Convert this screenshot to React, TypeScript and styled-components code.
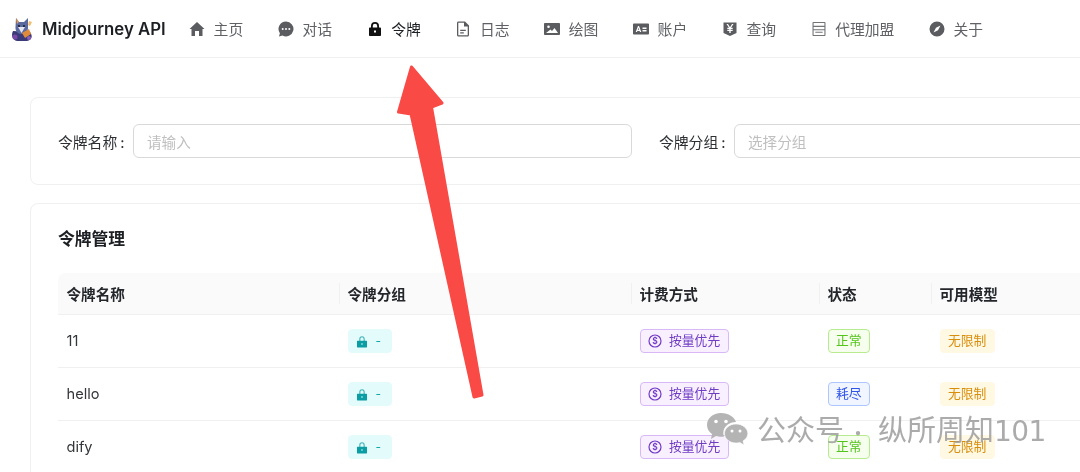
import React from "react";
import styled, { createGlobalStyle } from "styled-components";

const Global = createGlobalStyle`
  html, body { margin: 0; padding: 0; background: #fff; }
  body { font-family: Inter, "Noto Sans CJK SC", "Liberation Sans", sans-serif; color: #1c1f23; overflow: hidden; }
  #root { width: 1080px; height: 472px; overflow: hidden; position: relative; }
`;

const Page = styled.div`
  width: 1080px;
  height: 472px;
  overflow: hidden;
  position: relative;
  background: #fff;
  filter: blur(0.4px);
`;

const Header = styled.header`
  height: 57px;
  border-bottom: 1px solid #f0f0f1;
  display: flex;
  align-items: center;
  padding-left: 10px;
`;

const Brand = styled.div`
  display: flex;
  align-items: center;
  gap: 8px;
  width: 179px;
  flex: none;
  font-size: 16.8px;
  font-weight: 600;
  color: #1c1f23;
  white-space: nowrap;
`;

const Nav = styled.nav`
  display: flex;
  align-items: center;
  gap: 34.6px;
`;

const NavItem = styled.div<{ $active?: boolean }>`
  display: flex;
  align-items: center;
  gap: 8.6px;
  font-size: 14.8px;
  white-space: nowrap;
  color: ${(p) => (p.$active ? "#1c1f23" : "#5f6166")};
  svg { width: 16px; height: 16px; flex: none; fill: ${(p) => (p.$active ? "#111" : "#5a5c60")}; }
`;

const Main = styled.main`
  width: 1300px;
  padding: 39px 0 0 30px;
  display: flex;
  flex-direction: column;
  gap: 18px;
`;

const Card = styled.section`
  border: 1px solid #f0f0f1;
  border-radius: 8px;
  padding: 25px 27px;
`;

const SearchCard = styled(Card)`
  display: flex;
  align-items: center;
  height: 88px;
  box-sizing: border-box;
  padding-top: 0;
  padding-bottom: 0;
`;

const Field = styled.div`
  display: flex;
  align-items: center;
  margin-right: 27px;
`;

const Label = styled.span`
  font-size: 14.8px;
  color: #2c2f33;
  white-space: nowrap;
  width: 75px;
  flex: none;
`;

const Colon = styled.span`
  margin-left: 3px;
`;

const Input = styled.div<{ $w: number }>`
  width: ${(p) => p.$w}px;
  height: 34px;
  box-sizing: border-box;
  border: 1px solid #d9d9d9;
  border-radius: 6px;
  padding-left: 13px;
  display: flex;
  align-items: center;
  font-size: 14.6px;
  color: #bfbfbf;
`;

const Title = styled.h2`
  margin: 0 0 24px;
  font-size: 16.8px;
  line-height: 20px;
  font-weight: 600;
  color: #1c1f23;
`;

const Table = styled.table`
  border-collapse: separate;
  border-spacing: 0;
  table-layout: fixed;
  width: 1179px;
`;

const Th = styled.th<{ $w: number }>`
  width: ${(p) => p.$w}px;
  height: 42px;
  padding: 0 8px 0 8.500px;
  box-sizing: border-box;
  background: #fafafa;
  border-bottom: 1px solid #f0f0f0;
  text-align: left;
  font-size: 14.6px;
  font-weight: 600;
  color: #23262a;
  position: relative;
  &:first-child { border-top-left-radius: 8px; }
  &:not(:first-child)::before {
    content: "";
    position: absolute;
    left: 0;
    top: 10px;
    bottom: 10px;
    width: 1px;
    background: #f0f0f0;
  }
`;

const Td = styled.td`
  height: 53px;
  padding: 0 8px 0 8.500px;
  box-sizing: border-box;
  border-bottom: 1px solid #f0f0f0;
  font-size: 14.6px;
  color: #33363a;
`;

const Tag = styled.span<{ $bg: string; $bd?: string; $fg: string }>`
  display: inline-flex;
  align-items: center;
  height: 23.500px;
  box-sizing: border-box;
  padding: 0 7.500px;
  gap: 7px;
  border-radius: 4px;
  background: ${(p) => p.$bg};
  border: 1px solid ${(p) => p.$bd ?? p.$bg};
  color: ${(p) => p.$fg};
  font-size: 12.8px;
  line-height: 20px;
  white-space: nowrap;
  vertical-align: middle;
  svg { flex: none; }
`;

const GroupTag = styled(Tag)`
  width: 44px;
  padding: 0 7px;
  gap: 8px;
  font-size: 12px;
`;

const ArrowLayer = styled.svg`
  position: absolute;
  left: 0;
  top: 0;
  width: 1080px;
  height: 472px;
  pointer-events: none;
`;

const Watermark = styled.div`
  position: absolute;
  left: 706px;
  top: 411px;
  display: flex;
  align-items: center;
  gap: 9px;
  height: 38px;
  font-size: 29px;
  line-height: 38px;
  font-family: "Noto Sans CJK SC", Inter, sans-serif;
  color: rgba(150, 150, 150, 0.8);
  white-space: nowrap;
  svg { width: 42px; height: 36px; flex: none; }
`;

const WmDot = styled.span`
  display: inline-block;
  width: 34px;
  padding-right: 6px;
  box-sizing: border-box;
  text-align: center;
  font-size: 20px;
`;

const WmNum = styled.span`
  font-family: "DejaVu Sans", Inter, sans-serif;
  font-size: 28px;
  letter-spacing: -0.6px;
`;

const Logo = () => (
  <svg width="24" height="26" viewBox="0 0 24 26">
    <path d="M3 15 C1 19 2 24 7 25 L17 25 C22 24 23 20 20 16 Z" fill="#3b3a78" />
    <path d="M6 2 L9 6 L14 6 L18 2 L18 12 C18 16 14 18 11 18 C8 18 5 15 5.500 11 Z" fill="#5a6aa0" />
    <path d="M6 2 L9 6 L7 8 Z" fill="#e39a52" />
    <path d="M8 11 L15 11 L11.500 17 Z" fill="#e4e6f0" />
    <path d="M12 17 L19 13 L21 18 L15 22 Z" fill="#e08a3c" />
    <path d="M19 5 L22 6 L20 10 L18 9 Z" fill="#f2bf72" />
    <circle cx="5" cy="21" r="2.500" fill="#7a4aa8" />
    <circle cx="19" cy="22" r="2" fill="#8a5fb8" />
    <circle cx="9" cy="10" r="0.900" fill="#111" />
    <circle cx="14" cy="10" r="0.900" fill="#111" />
  </svg>
);

const HomeIcon = () => (
  <svg viewBox="0 0 16 16"><path d="M8 1 L15.500 8 L13.500 8 L13.500 15 L10 15 L10 10 L6 10 L6 15 L2.500 15 L2.500 8 L0.500 8 Z" /></svg>
);
const ChatIcon = () => (
  <svg viewBox="0 0 16 16">
    <path fillRule="evenodd" d="M8 .5a7.500 7.500 0 1 1-3.600 14.100L1 15.500l.9-3.200A7.500 7.500 0 0 1 8 .5ZM4.700 7a1 1 0 1 0 0 2 1 1 0 0 0 0-2Zm3.300 0a1 1 0 1 0 0 2 1 1 0 0 0 0-2Zm3.300 0a1 1 0 1 0 0 2 1 1 0 0 0 0-2Z" />
  </svg>
);
const LockIcon = () => (
  <svg viewBox="0 0 16 16">
    <path fillRule="evenodd" d="M4 6.500V5a4 4 0 0 1 8 0v1.500h1.200c.5 0 .8.300.8.800v7c0 .5-.3.700-.8.700H2.800c-.5 0-.8-.2-.8-.7v-7c0-.5.300-.8.800-.8H4Zm1.800 0h4.400V5a2.200 2.200 0 0 0-4.400 0v1.500ZM7 9.500v2h2v-2H7Z" />
  </svg>
);
const FileIcon = () => (
  <svg viewBox="0 0 16 16">
    <path fillRule="evenodd" d="M3.500 0.500H10L14 4.500V14c0 .8-.6 1.500-1.500 1.500h-9C2.600 15.500 2 14.800 2 14V2C2 1.200 2.600.5 3.500.5Zm0 1.300a.2.2 0 0 0-.2.200v12c0 .1.100.2.200.2h9a.2.2 0 0 0 .2-.2V5.500H9V1.800H3.500Zm1.700 7h5.600V10H5.200V8.800Zm0 2.500h3.600v1.200H5.200v-1.200Z" />
  </svg>
);
const ImageIcon = () => (
  <svg viewBox="0 0 16 16">
    <path fillRule="evenodd" d="M1 2h14c.5 0 1 .4 1 1v10c0 .6-.5 1-1 1H1c-.5 0-1-.4-1-1V3c0-.6.500-1 1-1Zm3.500 2.500a1.300 1.300 0 1 0 0 2.600 1.300 1.300 0 0 0 0-2.600ZM2 12h12L10.500 7 8 10 6.500 8.500 2 12Z" />
  </svg>
);
const IdIcon = () => (
  <svg viewBox="0 0 16 16">
    <path fillRule="evenodd" d="M1 2.500h14c.5 0 1 .4 1 1v9c0 .6-.5 1-1 1H1c-.5 0-1-.4-1-1v-9c0-.6.500-1 1-1ZM5 5 2.700 11h1.300l.4-1.100h2.200l.4 1.100h1.300L6 5H5Zm.5 1.800.7 2H4.800l.7-2ZM9.500 6.500V8h4V6.500h-4Zm0 2.500v1.500h4V9h-4Z" />
  </svg>
);
const ShieldIcon = () => (
  <svg viewBox="0 0 16 16">
    <path fillRule="evenodd" d="M1.500 1.500H14.500V12L8 15 1.500 12V1.500Zm3 1.500L7 6.800H5.300V8H7.300v.8H5.300V10h2v2h1.400v-2h2V8.800h-2V8h2V6.800H9L11.500 3H10L8 6.200 6 3H4.500Z" />
  </svg>
);
const PanelIcon = () => (
  <svg viewBox="0 0 16 16">
    <path fillRule="evenodd" d="M2.500 1h11c.6 0 1 .4 1 1v12c0 .6-.4 1-1 1h-11c-.6 0-1-.4-1-1V2c0-.6.400-1 1-1Zm.1 1.100v2.700h10.800V2.100H2.600Zm0 3.800v2.300h10.800V5.900H2.600Zm0 3.400v4.600h10.800V9.300H2.600Zm1.700 1.400h7.400v1H4.300v-1Z" opacity=".85" />
  </svg>
);
const CompassIcon = () => (
  <svg viewBox="0 0 16 16">
    <path fillRule="evenodd" d="M8 .5a7.500 7.500 0 1 1 0 15 7.500 7.500 0 0 1 0-15Zm3.500 4L7 6.800 4.500 11.500 9 9.200 11.500 4.500Z" />
  </svg>
);

const TealLock = () => (
  <svg width="12" height="13" viewBox="0 0 12 13" fill="#0a9ea4">
    <path d="M3.300 6V3.900a2.700 2.700 0 0 1 5.400 0V6H7.600V3.900a1.600 1.600 0 0 0-3.200 0V6H3.300Z" opacity=".75" />
    <path fillRule="evenodd" d="M1.500 5.700h9c.3 0 .5.200.5.500v5.800c0 .3-.2.500-.5.500h-9c-.3 0-.5-.2-.5-.5V6.200c0-.3.200-.5.500-.5ZM6 8.200a.8.800 0 1 0 0 1.600.8.800 0 0 0 0-1.600Z" />
  </svg>
);

const DollarIcon = () => (
  <svg width="14" height="14" viewBox="0 0 14 14">
    <circle cx="7" cy="7" r="6" fill="none" stroke="#7039c8" strokeWidth="1.200" />
    <text x="7" y="10" textAnchor="middle" fontSize="8.500" fontWeight="600" fill="#7039c8" fontFamily="Inter, sans-serif">$</text>
  </svg>
);

const navItems: { label: string; icon: React.ReactNode; active?: boolean }[] = [
  { label: "主页", icon: <HomeIcon /> },
  { label: "对话", icon: <ChatIcon /> },
  { label: "令牌", icon: <LockIcon />, active: true },
  { label: "日志", icon: <FileIcon /> },
  { label: "绘图", icon: <ImageIcon /> },
  { label: "账户", icon: <IdIcon /> },
  { label: "查询", icon: <ShieldIcon /> },
  { label: "代理加盟", icon: <PanelIcon /> },
  { label: "关于", icon: <CompassIcon /> },
];

const columns = [
  { t: "令牌名称", w: 281 },
  { t: "令牌分组", w: 292 },
  { t: "计费方式", w: 188 },
  { t: "状态", w: 112 },
  { t: "可用模型", w: 306 },
];

const rows = [
  { name: "11", ok: true },
  { name: "hello", ok: false },
  { name: "dify", ok: true },
];

export default function App() {
  return (
    <Page>
      <Global />
      <Header>
        <Brand>
          <Logo />
          Midjourney API
        </Brand>
        <Nav>
          {navItems.map((n) => (
            <NavItem key={n.label} $active={n.active}>
              {n.icon}
              {n.label}
            </NavItem>
          ))}
        </Nav>
      </Header>
      <Main>
        <SearchCard>
          <Field>
            <Label>令牌名称<Colon>:</Colon></Label>
            <Input $w={499}>请输入</Input>
          </Field>
          <Field>
            <Label>令牌分组<Colon>:</Colon></Label>
            <Input $w={400}>选择分组</Input>
          </Field>
        </SearchCard>
        <Card>
          <Title>令牌管理</Title>
          <Table>
            <thead>
              <tr>
                {columns.map((c) => (
                  <Th key={c.t} $w={c.w}>{c.t}</Th>
                ))}
              </tr>
            </thead>
            <tbody>
              {rows.map((r) => (
                <tr key={r.name}>
                  <Td>{r.name}</Td>
                  <Td>
                    <GroupTag $bg="#e4fbfb" $fg="#13a8a8">
                      <TealLock />-
                    </GroupTag>
                  </Td>
                  <Td>
                    <Tag $bg="#f9f0ff" $bd="#d9b8f8" $fg="#6f3cc4">
                      <DollarIcon />
                      按量优先
                    </Tag>
                  </Td>
                  <Td>
                    {r.ok ? (
                      <Tag $bg="#f6ffed" $bd="#b7eb8f" $fg="#52c41a">正常</Tag>
                    ) : (
                      <Tag $bg="#f0f5ff" $bd="#adc6ff" $fg="#2f54eb">耗尽</Tag>
                    )}
                  </Td>
                  <Td>
                    <Tag $bg="#fff8e3" $fg="#d98e0b">无限制</Tag>
                  </Td>
                </tr>
              ))}
            </tbody>
          </Table>
        </Card>
      </Main>
      <ArrowLayer viewBox="0 0 1080 472">
        <path
          d="M411.500 67 L442 103 L431.500 107 L482 395 L474 397 L411 114 L398.500 112 Z"
          fill="#f94a46"
          stroke="#f94a46"
          strokeWidth="3"
          strokeLinejoin="round"
        />
      </ArrowLayer>
      <Watermark>
        <svg viewBox="0 0 42 36">
          <path d="M15 1C7 1 1 6 1 13c0 4 2 7 5 9l-1 5 5-3c2 .5 3 .7 5 .7 1 0 2 0 3-.2-.5-1.300-.7-2.500-.7-3.500 0-6.500 6-11 12.700-11C28.500 5 22.500 1 15 1Z" fill="#b4b4b4" />
          <path d="M30 12c-6.500 0-11.500 4.300-11.500 9.500S23.500 31 30 31c1.300 0 2.600-.2 3.800-.6L38 33l-1-4c3-1.700 4.800-4.500 4.800-7.500C41.800 16.300 36.500 12 30 12Z" fill="#b4b4b4" stroke="#fff" strokeWidth=".6" />
          <circle cx="10" cy="9.500" r="1.800" fill="#fff" />
          <circle cx="20" cy="9.500" r="1.800" fill="#fff" />
          <circle cx="26" cy="19" r="1.500" fill="#fff" />
          <circle cx="34" cy="19" r="1.500" fill="#fff" />
        </svg>
        <span>公众号<WmDot>·</WmDot>纵所周知<WmNum>101</WmNum></span>
      </Watermark>
    </Page>
  );
}
